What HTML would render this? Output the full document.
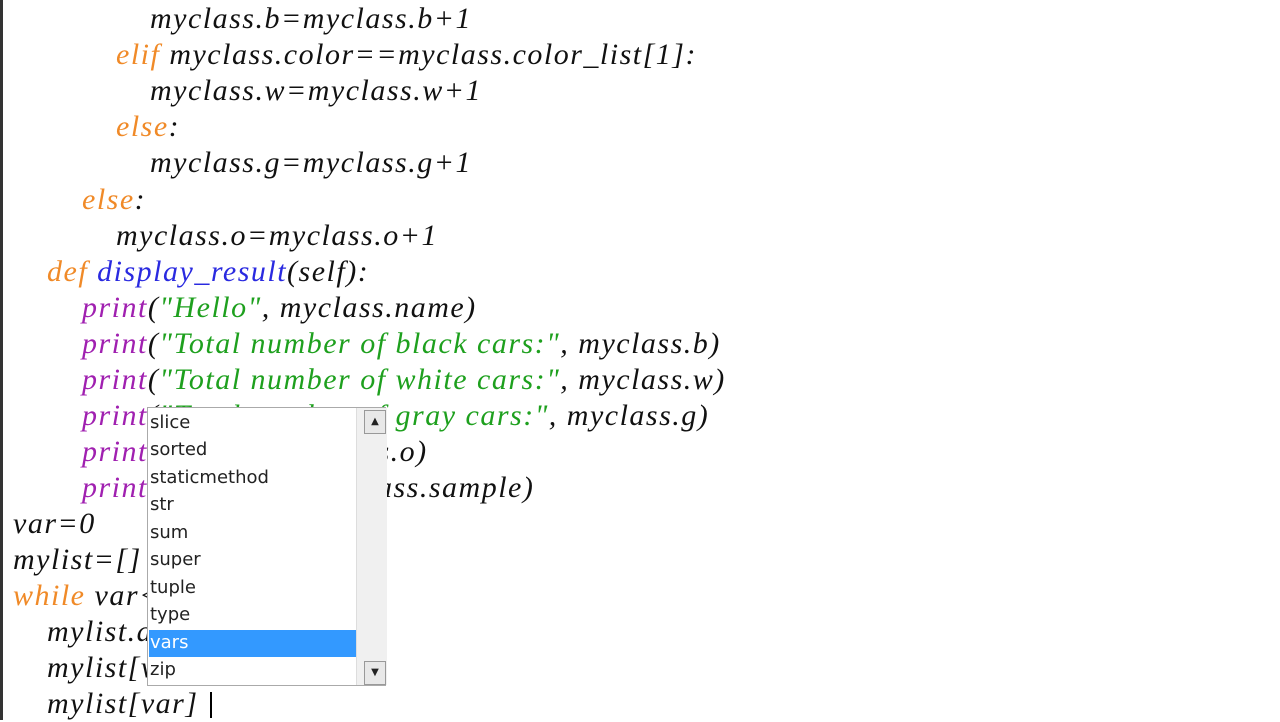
<!DOCTYPE html>
<html><head><meta charset="utf-8"><style>
html,body{margin:0;padding:0;width:1280px;height:720px;overflow:hidden;background:#fff}
.bar{position:absolute;left:0;top:0;width:3px;height:720px;background:#333}
.l{position:absolute;font-family:"Liberation Serif",serif;font-style:italic;font-size:30px;letter-spacing:1.5px;color:#111;white-space:pre;line-height:36px}
.k{color:#f08a28}.f{color:#2a2ae0}.p{color:#a020b0}.s{color:#1ea01e}
.pop{position:absolute;left:147px;top:407px;width:239px;height:279px;background:#fff;border:1px solid #aaa;box-sizing:border-box}
.it{position:absolute;left:2px;font-family:"DejaVu Sans","Liberation Sans",sans-serif;font-size:18px;color:#222;line-height:27px}
.sel{position:absolute;left:1px;top:222px;width:207px;height:27px;background:#3399ff}
.sb{position:absolute;left:208px;top:0;width:30px;height:277px;background:#f0f0f0;border-left:1px solid #ddd}
.ar{position:absolute;left:216px;width:20px;height:22px;background:#e8e8e8;border:1px solid #999;font-size:10px;text-align:center;line-height:22px;color:#222;font-family:"DejaVu Sans",sans-serif}
</style></head><body>
<div class="bar"></div>
<div class="l" style="left:150px;top:1px">myclass.b=myclass.b+1</div>
<div class="l" style="left:116px;top:37px"><span class="k">elif</span> myclass.color==myclass.color_list[1]:</div>
<div class="l" style="left:150px;top:73px">myclass.w=myclass.w+1</div>
<div class="l" style="left:116px;top:109px"><span class="k">else</span>:</div>
<div class="l" style="left:150px;top:145px">myclass.g=myclass.g+1</div>
<div class="l" style="left:82px;top:182px"><span class="k">else</span>:</div>
<div class="l" style="left:116px;top:218px">myclass.o=myclass.o+1</div>
<div class="l" style="left:47px;top:254px"><span class="k">def</span> <span class="f">display_result</span>(self):</div>
<div class="l" style="left:82px;top:290px"><span class="p">print</span>(<span class="s">"Hello"</span>, myclass.name)</div>
<div class="l" style="left:82px;top:326px"><span class="p">print</span>(<span class="s">"Total number of black cars:"</span>, myclass.b)</div>
<div class="l" style="left:82px;top:362px"><span class="p">print</span>(<span class="s">"Total number of white cars:"</span>, myclass.w)</div>
<div class="l" style="left:82px;top:398px"><span class="p">print</span>(<span class="s">"Total number of gray cars:"</span>, myclass.g)</div>
<div class="l" style="left:82px;top:434px"><span class="p">print</span>(<span class="s">"Total:"</span>, myclass.o)</div>
<div class="l" style="left:82px;top:470px"><span class="p">print</span>(<span class="s">"Sample:"</span>, myclass.sample)</div>
<div class="l" style="left:13px;top:506px">var=0</div>
<div class="l" style="left:13px;top:542px">mylist=[]</div>
<div class="l" style="left:13px;top:578px"><span class="k">while</span> var&lt;3:</div>
<div class="l" style="left:47px;top:614px">mylist.append(myclass())</div>
<div class="l" style="left:47px;top:650px">mylist[var].input()</div>
<div class="l" style="left:47px;top:686px">mylist[var]</div>
<div style="position:absolute;left:210px;top:692px;width:2px;height:26px;background:#000"></div>
<div class="pop">
<div class="sel"></div>
<div class="it" style="top:1px">slice</div>
<div class="it" style="top:28px">sorted</div>
<div class="it" style="top:56px">staticmethod</div>
<div class="it" style="top:83px">str</div>
<div class="it" style="top:111px">sum</div>
<div class="it" style="top:138px">super</div>
<div class="it" style="top:166px">tuple</div>
<div class="it" style="top:193px">type</div>
<div class="it" style="top:221px;color:#fff">vars</div>
<div class="it" style="top:248px">zip</div>
<div class="sb"></div>
<div class="ar" style="top:2px">▲</div>
<div class="ar" style="top:253px">▼</div>
</div>
</body></html>
